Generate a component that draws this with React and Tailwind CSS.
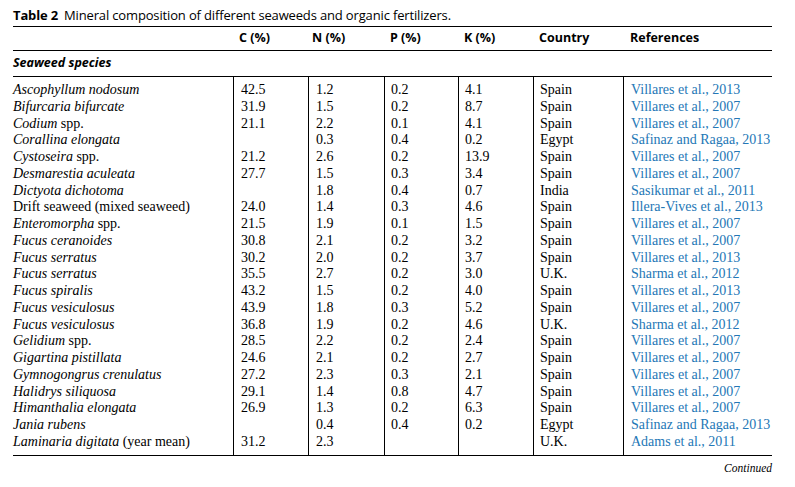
import React from "react";

const rows = [
  [["Ascophyllum nodosum", ""], "42.5", "1.2", "0.2", "4.1", "Spain", "Villares et al., 2013"],
  [["Bifurcaria bifurcate", ""], "31.9", "1.5", "0.2", "8.7", "Spain", "Villares et al., 2007"],
  [["Codium", " spp."], "21.1", "2.2", "0.1", "4.1", "Spain", "Villares et al., 2007"],
  [["Corallina elongata", ""], "", "0.3", "0.4", "0.2", "Egypt", "Safinaz and Ragaa, 2013"],
  [["Cystoseira", " spp."], "21.2", "2.6", "0.2", "13.9", "Spain", "Villares et al., 2007"],
  [["Desmarestia aculeata", ""], "27.7", "1.5", "0.3", "3.4", "Spain", "Villares et al., 2007"],
  [["Dictyota dichotoma", ""], "", "1.8", "0.4", "0.7", "India", "Sasikumar et al., 2011"],
  [["", "Drift seaweed (mixed seaweed)"], "24.0", "1.4", "0.3", "4.6", "Spain", "Illera-Vives et al., 2013"],
  [["Enteromorpha", " spp."], "21.5", "1.9", "0.1", "1.5", "Spain", "Villares et al., 2007"],
  [["Fucus ceranoides", ""], "30.8", "2.1", "0.2", "3.2", "Spain", "Villares et al., 2007"],
  [["Fucus serratus", ""], "30.2", "2.0", "0.2", "3.7", "Spain", "Villares et al., 2013"],
  [["Fucus serratus", ""], "35.5", "2.7", "0.2", "3.0", "U.K.", "Sharma et al., 2012"],
  [["Fucus spiralis", ""], "43.2", "1.5", "0.2", "4.0", "Spain", "Villares et al., 2013"],
  [["Fucus vesiculosus", ""], "43.9", "1.8", "0.3", "5.2", "Spain", "Villares et al., 2007"],
  [["Fucus vesiculosus", ""], "36.8", "1.9", "0.2", "4.6", "U.K.", "Sharma et al., 2012"],
  [["Gelidium", " spp."], "28.5", "2.2", "0.2", "2.4", "Spain", "Villares et al., 2007"],
  [["Gigartina pistillata", ""], "24.6", "2.1", "0.2", "2.7", "Spain", "Villares et al., 2007"],
  [["Gymnogongrus crenulatus", ""], "27.2", "2.3", "0.3", "2.1", "Spain", "Villares et al., 2007"],
  [["Halidrys siliquosa", ""], "29.1", "1.4", "0.8", "4.7", "Spain", "Villares et al., 2007"],
  [["Himanthalia elongata", ""], "26.9", "1.3", "0.2", "6.3", "Spain", "Villares et al., 2007"],
  [["Jania rubens", ""], "", "0.4", "0.4", "0.2", "Egypt", "Safinaz and Ragaa, 2013"],
  [["Laminaria digitata", " (year mean)"], "31.2", "2.3", "", "", "U.K.", "Adams et al., 2011"],
];

const grid = "grid grid-cols-[220px_75px_76px_74px_75px_90px_149px]";
const cell = "border-l border-black pl-[6px]";

function Spacer({ h }) {
  return (
    <div className={`${grid} ${h}`}>
      <div />
      <div className="border-l border-black" />
      <div className="border-l border-black" />
      <div className="border-l border-black" />
      <div className="border-l border-black" />
      <div className="border-l border-black" />
      <div className="border-l border-black" />
    </div>
  );
}

export default function App() {
  return (
    <div className="h-[487px] w-[795px] bg-white text-black">
      <div className="ml-[13px] w-[759px]">
        <div className="pt-[6px] pb-[2px] font-['Open_Sans',sans-serif] text-[13px] leading-[18px] tracking-[-0.15px]">
          <span className="font-bold">Table 2</span>
          <span className="ml-[6px]">Mineral composition of different seaweeds and organic fertilizers.</span>
        </div>

        <div className={`${grid} h-[25px] items-center border-y border-black font-['Open_Sans',sans-serif] text-[12.5px] font-bold`}>
          <div />
          <div className="pl-[6px]">C (%)</div>
          <div className="pl-[4px]">N (%)</div>
          <div className="pl-[6px]">P (%)</div>
          <div className="pl-[6px]">K (%)</div>
          <div className="pl-[6px]">Country</div>
          <div className="pl-[7px]">References</div>
        </div>

        <div className="flex h-[26px] items-center border-b border-black font-['Open_Sans',sans-serif] text-[12.5px] font-bold italic">
          Seaweed species
        </div>

        <div className="border-b border-black font-['Liberation_Serif',serif] text-[14px]">
          <Spacer h="h-[5px]" />
          {rows.map((r, i) => (
            <div key={i} className={`${grid} h-[16.75px] leading-[16.75px]`}>
              <div className="whitespace-nowrap">
                <i>{r[0][0]}</i>
                {r[0][1]}
              </div>
              <div className={`${cell} pl-[7px]`}>{r[1]}</div>
              <div className={`${cell} pl-[7px]`}>{r[2]}</div>
              <div className={cell}>{r[3]}</div>
              <div className={cell}>{r[4]}</div>
              <div className={cell}>{r[5]}</div>
              <div className={`${cell} pl-[7px] whitespace-nowrap text-[#2477b6]`}>{r[6]}</div>
            </div>
          ))}
          <Spacer h="h-[4px]" />
        </div>

        <div className="pt-[4px] text-right font-['Liberation_Serif',serif] text-[11.5px] italic">Continued</div>
      </div>
    </div>
  );
}
